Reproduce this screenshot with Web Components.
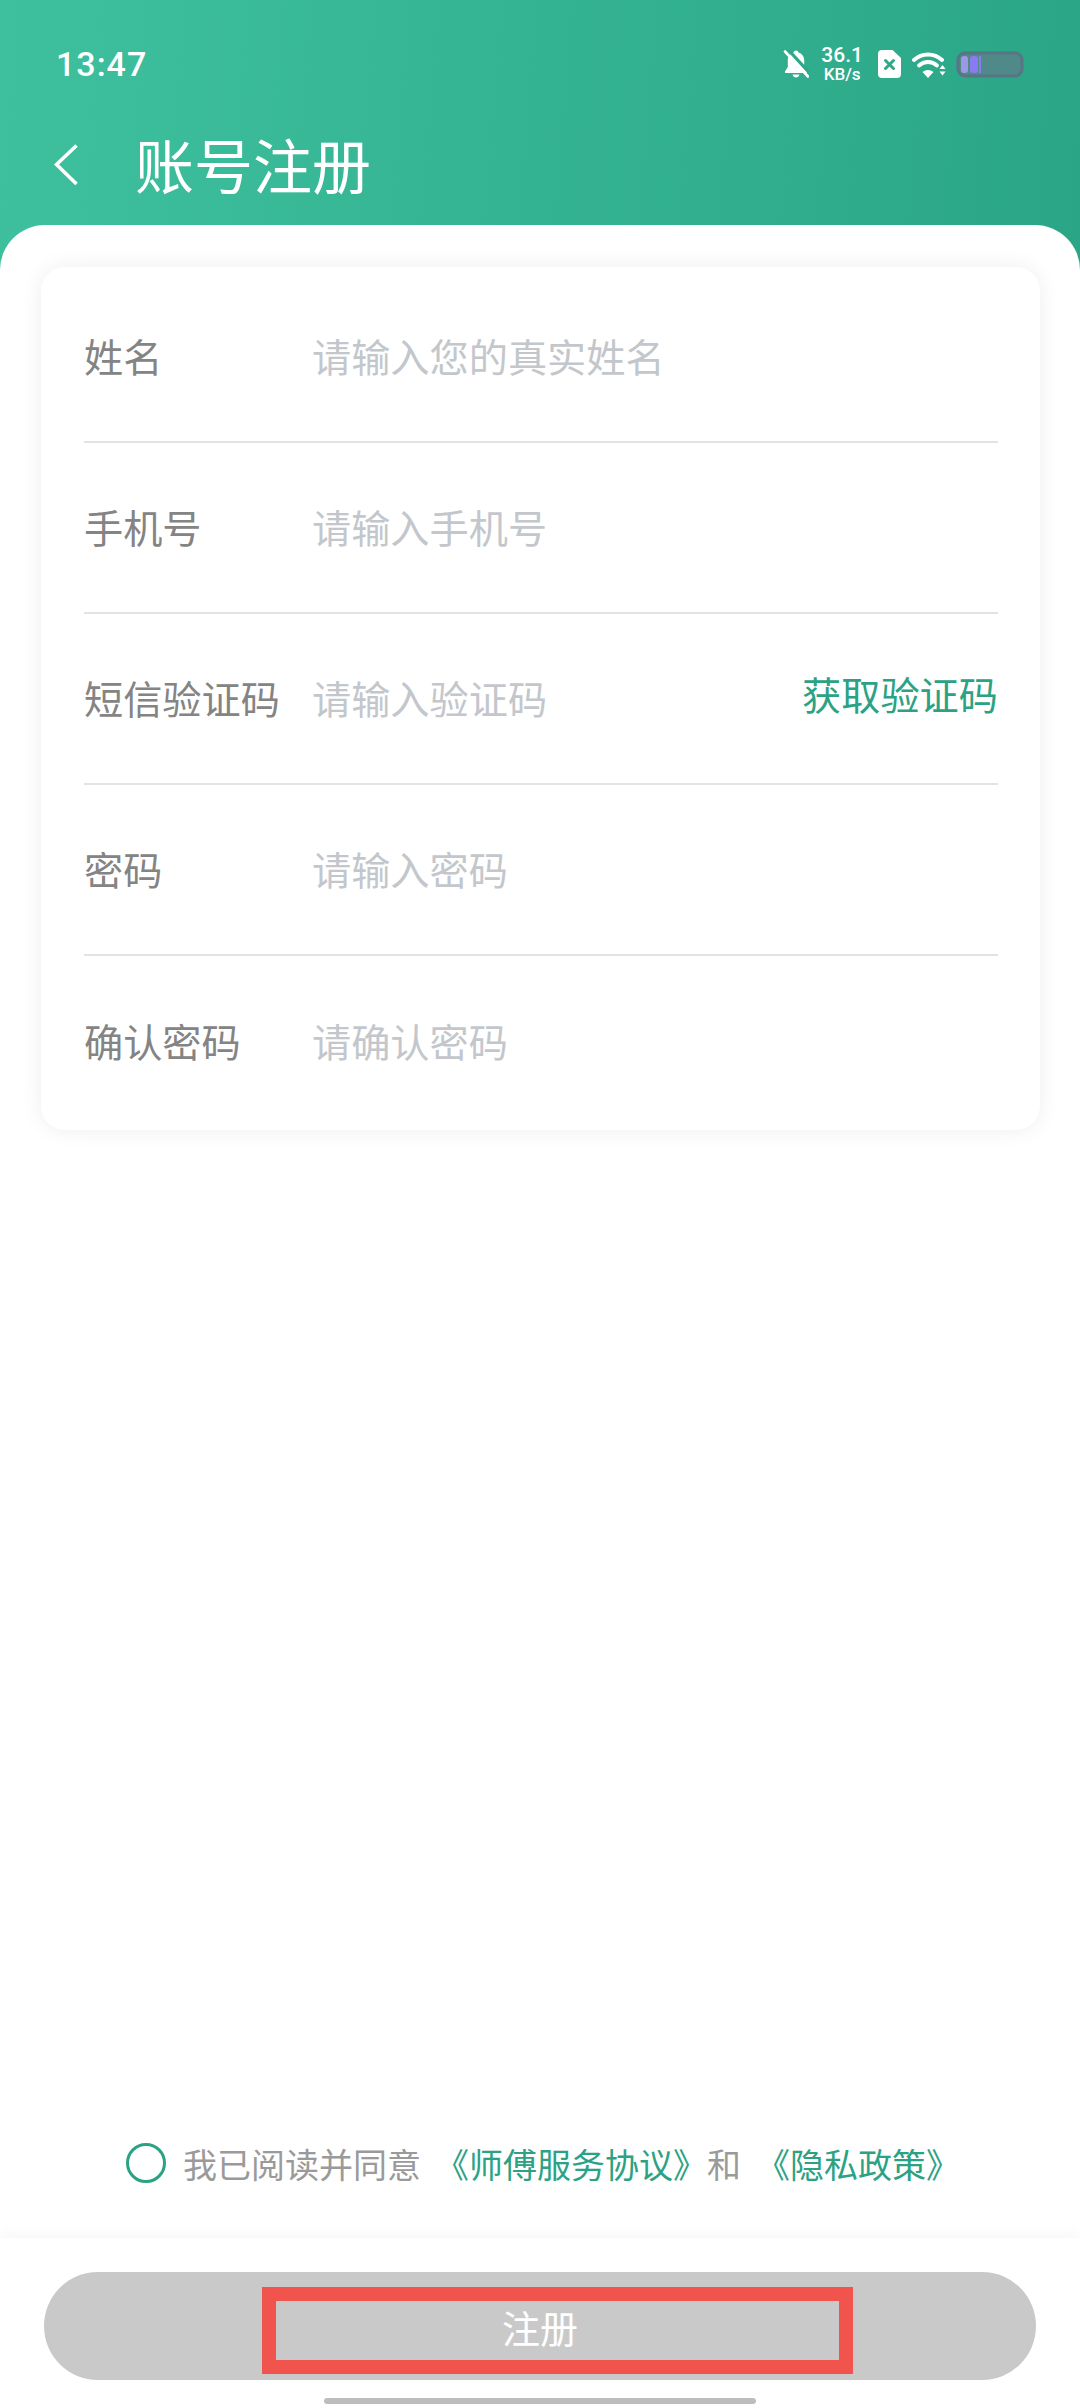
<!DOCTYPE html>
<html lang="zh">
<head>
<meta charset="utf-8">
<title>账号注册</title>
<style>
  html, body { margin: 0; padding: 0; background: #fff; }
  body { font-family: "Noto Sans CJK SC", "Noto Sans", sans-serif; }
</style>
</head>
<body>
<register-page>
  <status-bar slot="top" time="13:47"></status-bar>
  <title-bar slot="top">账号注册</title-bar>

  <form-card>
    <form-row placeholder="请输入您的真实姓名">姓名</form-row>
    <form-row placeholder="请输入手机号">手机号</form-row>
    <form-row placeholder="请输入验证码">短信验证码<span slot="action">获取验证码</span></form-row>
    <form-row placeholder="请输入密码">密码</form-row>
    <form-row placeholder="请确认密码" last>确认密码</form-row>
  </form-card>

  <agree-line slot="bottom"></agree-line>
  <submit-bar slot="bottom">注册</submit-bar>
</register-page>

<script>
// 状态栏
class StatusBar extends HTMLElement {
  constructor() {
    super();
    const shadow = this.attachShadow({ mode: "open" });
    shadow.innerHTML = `
      <style>
        :host { display: flex; align-items: center; height: 128px; padding: 0 56px 0 56px; box-sizing: border-box; color: #fff; font-family: Roboto, "Noto Sans", sans-serif; }
        .time { font-size: 34px; font-weight: 500; letter-spacing: 1px; flex: 1; }
        .icons { display: flex; align-items: center; }
        svg { display: block; }
        .speed { display: flex; flex-direction: column; align-items: center; margin: 0 15px 0 12px; font-weight: 500; color: #fff; }
        .speed b { font-weight: 500; font-size: 21px; line-height: 21px; }
        .speed i { font-style: normal; font-size: 17px; line-height: 17px; }
      </style>
      <div class="time">${this.getAttribute("time")}</div>
      <div class="icons">
        <svg width="26" height="28" viewBox="0 0 26 28">
          <path d="M13 .5c1.300 0 2.200.8 2.400 2 3.600 1 5.800 4 5.800 8V17l2.800 4.500c.5.8 0 1.500-1 1.500H3c-1 0-1.500-.7-1-1.500L4.800 17v-6.500c0-4 2.200-7 5.800-8 .2-1.200 1.100-2 2.400-2zM9.500 24.500h7c-.4 1.800-1.800 3-3.500 3s-3.100-1.200-3.500-3z" fill="#fff"/>
          <path d="M4.500 -1 28 24.500" stroke="#2ea888" stroke-width="3.200"/>
          <path d="M2 1.500 25 26.500" stroke="#fff" stroke-width="2.600" stroke-linecap="round"/>
        </svg>
        <div class="speed"><b>36.1</b><i>KB/s</i></div>
        <svg width="23" height="28" viewBox="0 0 23 28" style="margin-right:11px">
          <path d="M4 0h10.500L23 8v16a4 4 0 0 1-4 4H4a4 4 0 0 1-4-4V4a4 4 0 0 1 4-4z" fill="#fff"/>
          <path d="M7.500 10.500l8 8M15.500 10.500l-8 8" stroke="#2fa888" stroke-width="3" stroke-linecap="round"/>
        </svg>
        <svg width="34" height="27" viewBox="0 0 34 27" style="margin-right:10px">
          <path d="M2 9C10 1.500 22 1.500 30 9" fill="none" stroke="#fff" stroke-width="4" stroke-linecap="round"/>
          <path d="M7 14.500c5.200-4.700 12.800-4.700 18 0" fill="none" stroke="#fff" stroke-width="3.800" stroke-linecap="round"/>
          <path d="M10.500 21c3.200-2.800 7.800-2.800 11 0L16 27z" fill="#fff"/>
          <path d="M30.500 14l3 4h-6zM27.500 20.500h6l-3 4z" fill="#fff"/>
        </svg>
        <svg width="68" height="27" viewBox="0 0 68 27">
          <rect x="2" y="2" width="64" height="23" rx="7" fill="#4f8a88" stroke="#587585" stroke-width="3"/>
          <rect x="5" y="5" width="7" height="17" rx="3" fill="#9c98e4"/>
          <rect x="14" y="5" width="8" height="17" rx="3" fill="#8a7cf0"/>
          <rect x="23" y="5" width="2" height="17" fill="#8a7cf0"/>
        </svg>
      </div>`;
  }
}
customElements.define("status-bar", StatusBar);

// 标题栏
class TitleBar extends HTMLElement {
  constructor() {
    super();
    const shadow = this.attachShadow({ mode: "open" });
    shadow.innerHTML = `
      <style>
        :host { display: flex; align-items: center; height: 97px; padding: 0 0 26px 54px; box-sizing: border-box; color: #fff; font-size: 59px; line-height: 71px; }
        svg { display: block; margin-right: 57px; margin-top: 2px; }
      </style>
      <svg width="24" height="42" viewBox="0 0 24 42"><path d="M22.500 1.500 2.500 20.500l20 19.500" fill="none" stroke="#fff" stroke-width="3.600"/></svg>
      <slot></slot>`;
  }
}
customElements.define("title-bar", TitleBar);

// 表单卡片
class FormCard extends HTMLElement {
  constructor() {
    super();
    const shadow = this.attachShadow({ mode: "open" });
    shadow.innerHTML = `
      <style>
        :host { display: block; margin: 42px 40px 0 41px; padding: 5px 42px 3px 43px; background: #fff; border-radius: 24px; box-shadow: 0 0 22px rgba(0, 0, 0, 0.07); }
      </style>
      <slot></slot>`;
  }
}
customElements.define("form-card", FormCard);

// 单行输入
class FormRow extends HTMLElement {
  constructor() {
    super();
    const shadow = this.attachShadow({ mode: "open" });
    const line = this.hasAttribute("last") ? "none" : "2px solid #e1e3e6";
    shadow.innerHTML = `
      <style>
        :host { display: flex; align-items: center; height: 171px; box-sizing: border-box; border-bottom: ${line}; padding-bottom: 3px; font-size: 39.2px; }
        .label { width: 228px; color: #848484; }
        .hint { flex: 1; color: #c3c7cc; }
        ::slotted([slot="action"]) { color: #2ca284; margin-bottom: 9px; }
      </style>
      <div class="label"><slot></slot></div>
      <div class="hint">${this.getAttribute("placeholder")}</div>
      <slot name="action"></slot>`;
  }
}
customElements.define("form-row", FormRow);

// 协议勾选
class AgreeLine extends HTMLElement {
  constructor() {
    super();
    const shadow = this.attachShadow({ mode: "open" });
    shadow.innerHTML = `
      <style>
        :host { display: flex; align-items: center; height: 50px; padding-left: 126px; margin-bottom: 50px; font-size: 34px; color: #9a9a9a; white-space: nowrap; }
        .radio { width: 40px; height: 40px; box-sizing: border-box; border: 3px solid #2ca284; border-radius: 50%; margin-right: 17px; }
        a { color: #2ca284; text-decoration: none; }
        .a1 { margin-left: 14px; }
        .a2 { margin-left: 15px; }
      </style>
      <div class="radio"></div>
      <span>我已阅读并同意</span>
      <a class="a1">《师傅服务协议》</a>
      <span>和</span>
      <a class="a2">《隐私政策》</a>`;
  }
}
customElements.define("agree-line", AgreeLine);

// 底部按钮
class SubmitBar extends HTMLElement {
  constructor() {
    super();
    const shadow = this.attachShadow({ mode: "open" });
    shadow.innerHTML = `
      <style>
        :host { display: block; padding-top: 34px; background: #fff; box-shadow: 0 -5px 12px rgba(0, 0, 0, 0.03); }
        .btn { display: flex; position: relative; align-items: center; justify-content: center; height: 108px; margin: 0 44px; border-radius: 54px; background: #cac9ca; color: #fff; font-size: 38px; }
        /* 截图上的红色标注框 */
        .mark { position: absolute; left: 218px; top: 15px; width: 591px; height: 87px; box-sizing: border-box; border: 14px solid #f0544c; }
        .home { width: 432px; height: 6px; margin: 18px auto 4px; border-radius: 3px; background: #bdbdbd; }
      </style>
      <div class="btn"><slot></slot><div class="mark"></div></div>
      <div class="home"></div>`;
  }
}
customElements.define("submit-bar", SubmitBar);

// 页面
class RegisterPage extends HTMLElement {
  constructor() {
    super();
    const shadow = this.attachShadow({ mode: "open" });
    shadow.innerHTML = `
      <style>
        :host { display: flex; flex-direction: column; height: 2408px; overflow: hidden; background: linear-gradient(95deg, #3ec09e 0%, #2aa686 100%) top / 100% 280px no-repeat #fff; }
        .sheet { flex: 1; display: flex; flex-direction: column; background: #fff; border-radius: 45px 45px 0 0; }
        .grow { flex: 1; }
      </style>
      <slot name="top"></slot>
      <div class="sheet">
        <slot></slot>
        <div class="grow"></div>
        <slot name="bottom"></slot>
      </div>`;
  }
}
customElements.define("register-page", RegisterPage);
</script>
</body>
</html>
